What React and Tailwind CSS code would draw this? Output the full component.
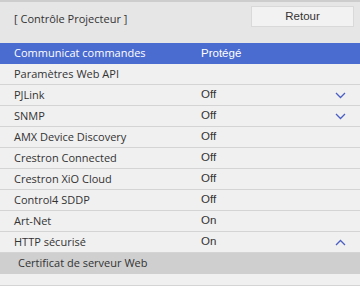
const rows = [
  { label: "Paramètres Web API", value: "" },
  { label: "PJLink", value: "Off", chevron: "down" },
  { label: "SNMP", value: "Off", chevron: "down" },
  { label: "AMX Device Discovery", value: "Off" },
  { label: "Crestron Connected", value: "Off" },
  { label: "Crestron XiO Cloud", value: "Off" },
  { label: "Control4 SDDP", value: "Off" },
  { label: "Art-Net", value: "On" },
  { label: "HTTP sécurisé", value: "On", chevron: "up" },
];

function Chevron({ dir }) {
  return (
    <svg width="11" height="7" viewBox="0 0 11 7" className="text-[#4a5fc4]">
      <path
        d={dir === "up" ? "M1 6 L5.5 1.5 L10 6" : "M1 1 L5.5 5.5 L10 1"}
        fill="none"
        stroke="currentColor"
        strokeWidth="1.3"
      />
    </svg>
  );
}

export default function App() {
  return (
    <div className="w-[360px] h-[286px] overflow-hidden bg-[#f0f0f0] font-['Open_Sans',sans-serif] text-[11px] text-[#333]">
      <div className="h-[43px] bg-[#e6e6e6] border-t-2 border-[#cdcdcd] flex justify-between pl-[14px] pr-[6px]">
        <div className="mt-[8px] leading-[18px]">[ Contrôle Projecteur ]</div>
        <button className="mt-[4px] w-[103px] h-[21px] bg-[#f2f2f2] border border-[#d9d9d9] font-['Liberation_Sans',sans-serif] text-[11.5px] text-[#333] leading-none">
          Retour
        </button>
      </div>
      <div className="h-[21px] bg-[#4a6bd0] text-white flex items-center">
        <div className="pl-[14px] w-[201px]">Communicat commandes</div>
        <div className="font-['Liberation_Sans',sans-serif] text-[11.5px]">Protégé</div>
      </div>
      {rows.map((r) => (
        <div key={r.label} className="h-[21px] border-b border-[#d4d4d4] flex items-center">
          <div className="pl-[14px] w-[201px]">{r.label}</div>
          <div className="flex-1 font-['Liberation_Sans',sans-serif] text-[11.5px]">{r.value}</div>
          {r.chevron && (
            <div className="pr-[14px] flex items-center">
              <Chevron dir={r.chevron} />
            </div>
          )}
        </div>
      ))}
      <div className="h-[21px] bg-[#cfcfcf] flex items-center pl-[18px]">
        Certificat de serveur Web
      </div>
      <div className="h-[12px] border-b border-[#d4d4d4]" />
    </div>
  );
}
